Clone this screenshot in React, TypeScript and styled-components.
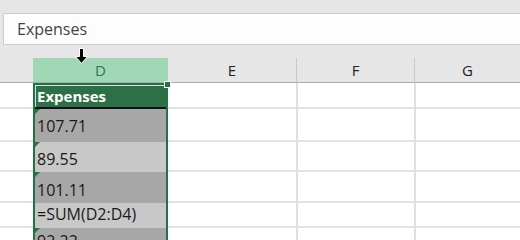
import React from "react";
import styled, { createGlobalStyle } from "styled-components";

const GlobalStyle = createGlobalStyle`
  html, body { margin: 0; padding: 0; background: #e6e6e6; }
  body { font-family: "Open Sans", "Noto Sans", sans-serif; }
  * { box-sizing: border-box; }
`;

const Page = styled.div`
  position: relative;
  width: 520px;
  height: 240px;
  overflow: hidden;
  background: #e6e6e6;
`;

const TopBand = styled.div`
  height: 13px;
`;

const FormulaBar = styled.div`
  margin-left: 3px;
  height: 32px;
  background: #fdfdfd;
  border: 1px solid #cdcdcd;
  border-right: none;
  display: flex;
  align-items: center;
  padding-left: 13px;
  font-size: 16px;
  color: #444;
`;

const HeaderRow = styled.div`
  margin-top: 13px;
  height: 25px;
  display: flex;
  border-bottom: 1px solid #ababab;
`;

const HeaderCell = styled.div<{ $w?: number; $active?: boolean; $sep?: boolean }>`
  flex: ${(p) => (p.$w ? `0 0 ${p.$w}px` : "1 1 auto")};
  display: flex;
  align-items: center;
  justify-content: center;
  font-size: 15px;
  color: ${(p) => (p.$active ? "#2b7a4b" : "#222")};
  background: ${(p) => (p.$active ? "#a0d7b4" : "transparent")};
  border-right: ${(p) => (p.$sep ? "1px solid #c8c8c8" : "none")};
`;

const Body = styled.div`
  display: flex;
  background: #fff;
  height: 157px;
`;

const Column = styled.div<{ $w?: number; $sep?: boolean }>`
  flex: ${(p) => (p.$w ? `0 0 ${p.$w}px` : "1 1 auto")};
  display: flex;
  flex-direction: column;
  border-right: ${(p) => (p.$sep ? "2px solid #e0e0e0" : "none")};
`;

const Cell = styled.div<{ $h: number }>`
  flex: 0 0 ${(p) => p.$h}px;
  border-bottom: 2px solid #e2e2e2;
`;

const Selection = styled.div`
  flex: 0 0 135px;
  display: flex;
  flex-direction: column;
  border: 2px solid #217346;
  border-bottom: none;
`;

const TitleCell = styled.div`
  flex: 0 0 24px;
  background: #2d7047;
  color: #fff;
  font-weight: 700;
  font-size: 15px;
  line-height: 20px;
  padding: 1px 0 0 2px;
  border-bottom: 2px solid #111;
  box-shadow: inset 1px 1px 0 #cfe6d8;
`;

const DataCell = styled.div<{ $h: number; $dark: boolean; $pad: number }>`
  position: relative;
  flex: 0 0 ${(p) => p.$h}px;
  background: ${(p) => (p.$dark ? "#a7a7a7" : "#c8c8c8")};
  color: #1a1a1a;
  font-size: 16px;
  line-height: 20px;
  padding: ${(p) => p.$pad}px 0 0 2px;
  white-space: nowrap;
`;

const Flag = styled.span`
  position: absolute;
  left: 0;
  top: 0;
  width: 0;
  height: 0;
  border-top: 5px solid #1f7a3a;
  border-right: 5px solid transparent;
`;

const Handle = styled.div`
  position: absolute;
  left: 164px;
  top: 81px;
  width: 7px;
  height: 7px;
  background: #217346;
  border: 1px solid #f2f7f3;
`;

const Cursor = styled.svg`
  position: absolute;
  left: 74px;
  top: 48px;
`;

const rowHeights = [26, 33, 30, 31, 25, 30];

const dataRows = [
  { v: "107.71", h: 33, dark: true, pad: 7, flag: true },
  { v: "89.55", h: 30, dark: false, pad: 7, flag: true },
  { v: "101.11", h: 31, dark: true, pad: 8, flag: true },
  { v: "=SUM(D2:D4)", h: 25, dark: false, pad: 1, flag: false },
  { v: "92.22", h: 30, dark: true, pad: 3, flag: true },
];

const PlainColumn: React.FC<{ w?: number; sep?: boolean }> = ({ w, sep }) => (
  <Column $w={w} $sep={sep}>
    {rowHeights.map((h, i) => (
      <Cell key={i} $h={h} />
    ))}
  </Column>
);

export default function App() {
  return (
    <>
      <GlobalStyle />
      <Page>
        <TopBand />
        <FormulaBar>Expenses</FormulaBar>
        <HeaderRow>
          <HeaderCell $w={33} />
          <HeaderCell $w={135} $active>
            D
          </HeaderCell>
          <HeaderCell $w={129} $sep>
            E
          </HeaderCell>
          <HeaderCell $w={118} $sep>
            F
          </HeaderCell>
          <HeaderCell>G</HeaderCell>
        </HeaderRow>
        <Body>
          <PlainColumn w={33} />
          <Selection>
            <TitleCell>Expenses</TitleCell>
            {dataRows.map((r, i) => (
              <DataCell key={i} $h={r.h} $dark={r.dark} $pad={r.pad}>
                {r.flag && <Flag />}
                {r.v}
              </DataCell>
            ))}
          </Selection>
          <PlainColumn w={130} sep />
          <PlainColumn w={118} sep />
          <PlainColumn />
        </Body>
        <Handle />
        <Cursor width="15" height="17" viewBox="0 0 15 17">
          <path
            d="M5.5 0.5 H9.5 V8.5 H13.5 L7.5 15.5 L1.5 8.5 H5.5 Z"
            fill="#000"
            stroke="#fff"
            strokeWidth="1"
            strokeLinejoin="miter"
          />
        </Cursor>
      </Page>
    </>
  );
}
